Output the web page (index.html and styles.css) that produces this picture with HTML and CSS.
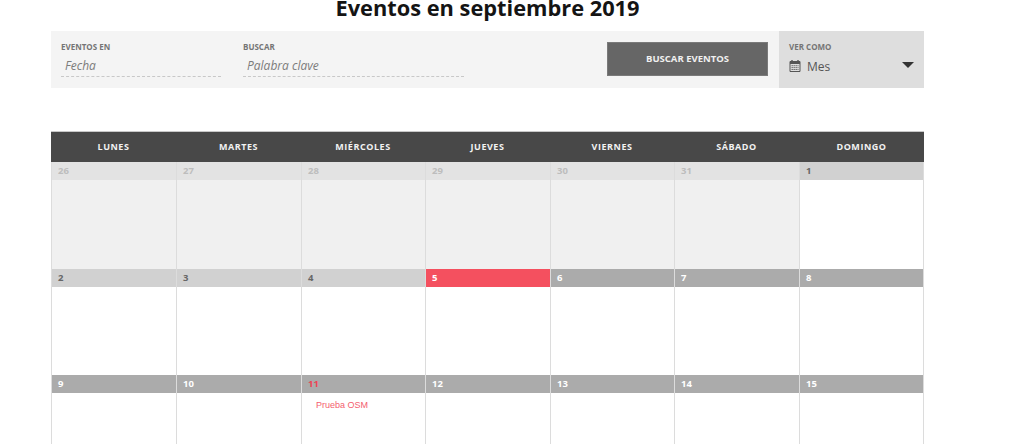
FILE: index.html
```html
<!DOCTYPE html>
<html lang="es">
<head>
<meta charset="utf-8">
<title>Eventos en septiembre 2019</title>
<link rel="stylesheet" href="styles.css">
</head>
<body>
<main class="page">
  <h1 class="title">Eventos en septiembre 2019</h1>
  <form class="bar">
    <div class="field field-date">
      <span class="label">EVENTOS EN</span>
      <span class="input">Fecha</span>
    </div>
    <div class="field field-search">
      <span class="label">BUSCAR</span>
      <span class="input">Palabra clave</span>
    </div>
    <div class="submit">BUSCAR EVENTOS</div>
    <div class="view">
      <span class="label">VER COMO</span>
      <div class="view-row">
        <svg class="cal" viewBox="0 0 12 13" width="12" height="13" aria-hidden="true">
          <path d="M1 2.5h10v10H1z" fill="none" stroke="#555" stroke-width="1"/>
          <path d="M1 2.5h10v2.5H1z" fill="#555"/>
          <path d="M3 1v2.5M9 1v2.5" stroke="#555" stroke-width="1.4"/>
          <path d="M2.5 6.7h7M2.5 8.6h7M2.5 10.5h7" stroke="#666" stroke-width="1" stroke-dasharray="1.4 .6"/>
        </svg>
        <span class="view-text">Mes</span>
        <span class="caret"></span>
      </div>
    </div>
  </form>

  <section class="calendar">
    <div class="head">
      <div>LUNES</div><div>MARTES</div><div>MIÉRCOLES</div><div>JUEVES</div><div>VIERNES</div><div>SÁBADO</div><div>DOMINGO</div>
    </div>
    <div class="week">
      <div class="cell prev"><div class="num">26</div></div>
      <div class="cell prev"><div class="num">27</div></div>
      <div class="cell prev"><div class="num">28</div></div>
      <div class="cell prev"><div class="num">29</div></div>
      <div class="cell prev"><div class="num">30</div></div>
      <div class="cell prev"><div class="num">31</div></div>
      <div class="cell past"><div class="num">1</div></div>
    </div>
    <div class="week">
      <div class="cell past"><div class="num">2</div></div>
      <div class="cell past"><div class="num">3</div></div>
      <div class="cell past"><div class="num">4</div></div>
      <div class="cell today"><div class="num">5</div></div>
      <div class="cell future"><div class="num">6</div></div>
      <div class="cell future"><div class="num">7</div></div>
      <div class="cell future"><div class="num">8</div></div>
    </div>
    <div class="week">
      <div class="cell future"><div class="num">9</div></div>
      <div class="cell future"><div class="num">10</div></div>
      <div class="cell future has-event"><div class="num">11</div><a class="event">Prueba OSM</a></div>
      <div class="cell future"><div class="num">12</div></div>
      <div class="cell future"><div class="num">13</div></div>
      <div class="cell future"><div class="num">14</div></div>
      <div class="cell future"><div class="num">15</div></div>
    </div>
  </section>
</main>
</body>
</html>
```

FILE: styles.css
```css
html, body {
  margin: 0;
  padding: 0;
  height: 444px;
  overflow: hidden;
  background: #fff;
}

body {
  font-family: "Open Sans", "Liberation Sans", sans-serif;
}

.page {
  width: 873px;
  margin-left: 51px;
}

.title {
  margin: -7px 0 0;
  height: 38px;
  font-size: 21.8px;
  line-height: 30px;
  font-weight: 700;
  color: #141414;
  text-align: center;
}

.bar {
  display: flex;
  height: 57px;
  background: #f4f4f4;
  margin-bottom: 44px;
}

.field {
  display: flex;
  flex-direction: column;
  padding-top: 10px;
  box-sizing: border-box;
}

.field-date {
  width: 160px;
  margin-left: 10px;
}

.field-search {
  width: 221px;
  margin-left: 22px;
}

.label {
  display: block;
  font-size: 8px;
  line-height: 12px;
  font-weight: 700;
  color: #757575;
}

.input {
  height: 22px;
  margin-top: 1px;
  padding-left: 4px;
  font-size: 12px;
  line-height: 23px;
  font-style: italic;
  color: #7c7c7c;
  border-bottom: 1px dashed #c8c8c8;
}

.submit {
  width: 161px;
  height: 34px;
  margin: 11px 0 0 143px;
  background: #666;
  border: 1px solid #7a7a7a;
  box-sizing: border-box;
  color: #f0f0f0;
  font-size: 9.5px;
  font-weight: 700;
  line-height: 32px;
  text-align: center;
}

.view {
  width: 145px;
  margin-left: 11px;
  padding: 10px 10px 0;
  box-sizing: border-box;
  background: #dedede;
}

.view-row {
  display: flex;
  align-items: center;
  height: 18px;
  margin-top: 4px;
}

.cal {
  flex: none;
  margin-top: -2px;
}

.view-text {
  margin-left: 6px;
  font-size: 12px;
  color: #555;
}

.caret {
  margin-left: auto;
  width: 0;
  height: 0;
  border-left: 6px solid transparent;
  border-right: 6px solid transparent;
  border-top: 6px solid #333;
  margin-top: -2px;
}

.head {
  display: grid;
  grid-template-columns: 125px 125px 124px 125px 124px 125px 125px;
  height: 30px;
  background: #484848;
  border-top: 1px solid #c8c8c8;
  margin-top: -1px;
}

.head div {
  color: #f2f2f2;
  font-size: 9px;
  font-weight: 700;
  letter-spacing: 0.55px;
  line-height: 29px;
  text-align: center;
}

.week {
  display: grid;
  grid-template-columns: 125px 125px 124px 125px 124px 125px 125px;
  height: 106.5px;
}

.cell {
  box-sizing: border-box;
  border-left: 1px solid #dcdcdc;
  background: #fff;
}

.cell:last-child {
  border-right: 1px solid #dcdcdc;
}

.num {
  height: 18px;
  padding-left: 6px;
  font-size: 9.5px;
  font-weight: 700;
  line-height: 18px;
  box-sizing: border-box;
}

.prev {
  background: #f0f0f0;
}

.prev .num {
  background: #e3e3e3;
  color: #bdbdbd;
}

.past .num {
  background: #d1d1d1;
  color: #666;
}

.today .num {
  background: #f4505f;
  color: #fff;
}

.future .num {
  background: #ababab;
  color: #fff;
}

.has-event .num {
  color: #ee4455;
}

.event {
  display: block;
  margin: 7px 0 0 14px;
  font-family: "Liberation Sans", Arial, sans-serif;
  font-size: 9px;
  line-height: 11px;
  color: #f4606e;
}
```
